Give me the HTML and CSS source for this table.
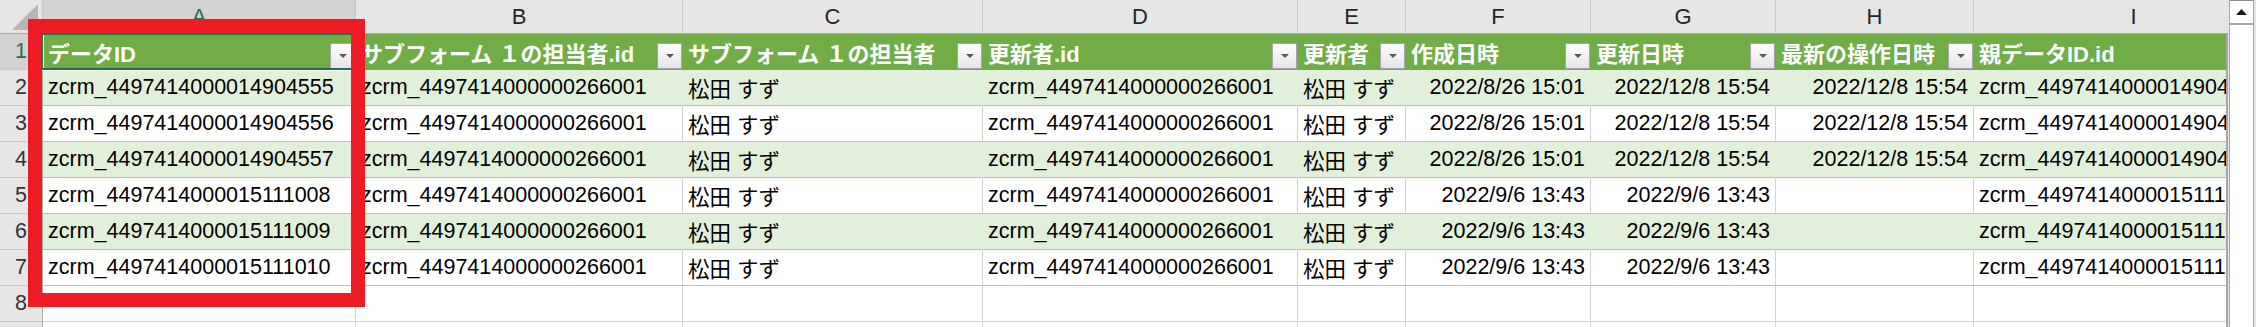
FILE: index.html
```html
<!DOCTYPE html>
<html lang="ja">
<head>
<meta charset="utf-8">
<title>Sheet</title>
<link rel="stylesheet" href="styles.css">
</head>
<body>
<div class="window">
  <div class="grid">
    <div class="row head">
      <div class="corner"><svg width="42" height="33" viewBox="0 0 42 33"><polygon points="12,30 38,30 38,4" fill="#b5b5b5"/></svg></div>
      <div class="colhdr sel">A</div>
      <div class="colhdr">B</div>
      <div class="colhdr">C</div>
      <div class="colhdr">D</div>
      <div class="colhdr">E</div>
      <div class="colhdr">F</div>
      <div class="colhdr">G</div>
      <div class="colhdr">H</div>
      <div class="colhdr">I</div>
    </div>
    <div class="row">
      <div class="rowhdr sel">1</div>
      <div class="th"><span>データID</span><span class="filter"><svg width="8" height="4" viewBox="0 0 8 4"><polygon points="0,0 8,0 4,4" fill="#595959"/></svg></span></div>
      <div class="th"><span>サブフォーム １の担当者.id</span><span class="filter"><svg width="8" height="4" viewBox="0 0 8 4"><polygon points="0,0 8,0 4,4" fill="#595959"/></svg></span></div>
      <div class="th"><span>サブフォーム １の担当者</span><span class="filter"><svg width="8" height="4" viewBox="0 0 8 4"><polygon points="0,0 8,0 4,4" fill="#595959"/></svg></span></div>
      <div class="th"><span>更新者.id</span><span class="filter"><svg width="8" height="4" viewBox="0 0 8 4"><polygon points="0,0 8,0 4,4" fill="#595959"/></svg></span></div>
      <div class="th"><span>更新者</span><span class="filter"><svg width="8" height="4" viewBox="0 0 8 4"><polygon points="0,0 8,0 4,4" fill="#595959"/></svg></span></div>
      <div class="th"><span>作成日時</span><span class="filter"><svg width="8" height="4" viewBox="0 0 8 4"><polygon points="0,0 8,0 4,4" fill="#595959"/></svg></span></div>
      <div class="th"><span>更新日時</span><span class="filter"><svg width="8" height="4" viewBox="0 0 8 4"><polygon points="0,0 8,0 4,4" fill="#595959"/></svg></span></div>
      <div class="th"><span>最新の操作日時</span><span class="filter"><svg width="8" height="4" viewBox="0 0 8 4"><polygon points="0,0 8,0 4,4" fill="#595959"/></svg></span></div>
      <div class="th"><span>親データID.id</span></div>
    </div>
    <div class="row band">
      <div class="rowhdr">2</div>
      <div class="c">zcrm_4497414000014904555</div>
      <div class="c">zcrm_4497414000000266001</div>
      <div class="c">松田 すず</div>
      <div class="c">zcrm_4497414000000266001</div>
      <div class="c">松田 すず</div>
      <div class="c r">2022/8/26 15:01</div>
      <div class="c r">2022/12/8 15:54</div>
      <div class="c r">2022/12/8 15:54</div>
      <div class="c">zcrm_4497414000014904550</div>
    </div>
    <div class="row plain">
      <div class="rowhdr">3</div>
      <div class="c">zcrm_4497414000014904556</div>
      <div class="c">zcrm_4497414000000266001</div>
      <div class="c">松田 すず</div>
      <div class="c">zcrm_4497414000000266001</div>
      <div class="c">松田 すず</div>
      <div class="c r">2022/8/26 15:01</div>
      <div class="c r">2022/12/8 15:54</div>
      <div class="c r">2022/12/8 15:54</div>
      <div class="c">zcrm_4497414000014904550</div>
    </div>
    <div class="row band">
      <div class="rowhdr">4</div>
      <div class="c">zcrm_4497414000014904557</div>
      <div class="c">zcrm_4497414000000266001</div>
      <div class="c">松田 すず</div>
      <div class="c">zcrm_4497414000000266001</div>
      <div class="c">松田 すず</div>
      <div class="c r">2022/8/26 15:01</div>
      <div class="c r">2022/12/8 15:54</div>
      <div class="c r">2022/12/8 15:54</div>
      <div class="c">zcrm_4497414000014904550</div>
    </div>
    <div class="row plain">
      <div class="rowhdr">5</div>
      <div class="c">zcrm_4497414000015111008</div>
      <div class="c">zcrm_4497414000000266001</div>
      <div class="c">松田 すず</div>
      <div class="c">zcrm_4497414000000266001</div>
      <div class="c">松田 すず</div>
      <div class="c r">2022/9/6 13:43</div>
      <div class="c r">2022/9/6 13:43</div>
      <div class="c r"></div>
      <div class="c">zcrm_4497414000015111007</div>
    </div>
    <div class="row band">
      <div class="rowhdr">6</div>
      <div class="c">zcrm_4497414000015111009</div>
      <div class="c">zcrm_4497414000000266001</div>
      <div class="c">松田 すず</div>
      <div class="c">zcrm_4497414000000266001</div>
      <div class="c">松田 すず</div>
      <div class="c r">2022/9/6 13:43</div>
      <div class="c r">2022/9/6 13:43</div>
      <div class="c r"></div>
      <div class="c">zcrm_4497414000015111007</div>
    </div>
    <div class="row plain">
      <div class="rowhdr">7</div>
      <div class="c">zcrm_4497414000015111010</div>
      <div class="c">zcrm_4497414000000266001</div>
      <div class="c">松田 すず</div>
      <div class="c">zcrm_4497414000000266001</div>
      <div class="c">松田 すず</div>
      <div class="c r">2022/9/6 13:43</div>
      <div class="c r">2022/9/6 13:43</div>
      <div class="c r"></div>
      <div class="c">zcrm_4497414000015111007</div>
    </div>
    <div class="row empty">
      <div class="rowhdr">8</div>
      <div class="c"></div><div class="c"></div><div class="c"></div><div class="c"></div>
      <div class="c"></div><div class="c"></div><div class="c"></div><div class="c"></div><div class="c"></div>
    </div>
    <div class="row empty">
      <div class="rowhdr">9</div>
      <div class="c"></div><div class="c"></div><div class="c"></div><div class="c"></div>
      <div class="c"></div><div class="c"></div><div class="c"></div><div class="c"></div><div class="c"></div>
    </div>
  </div>
  <div class="vscroll">
    <div class="track">
      <div class="up"><svg width="11" height="6" viewBox="0 0 11 6"><polygon points="0,6 11,6 5.5,0" fill="#1a1a1a"/></svg></div>
    </div>
  </div>
  <div class="selbox"></div>
  <div class="redbox"></div>
</div>
</body>
</html>
```

FILE: styles.css
```css
* {
  box-sizing: border-box;
  margin: 0;
  padding: 0;
}

html, body {
  width: 2256px;
  height: 327px;
  overflow: hidden;
  background: #fff;
}

body {
  font-family: "Liberation Sans", "Noto Sans CJK JP", sans-serif;
  font-size: 21.5px;
  color: #000;
}

.window {
  position: relative;
  display: flex;
  height: 327px;
}

.grid {
  width: 2226px;
  flex: none;
  overflow: hidden;
  display: flex;
  flex-direction: column;
}

.row {
  flex: none;
  height: 36px;
  display: grid;
  grid-template-columns: 43px 313px 327px 300px 315px 108px 185px 185px 198px 320px;
}

.row.head {
  height: 34px;
}

.row > div {
  display: flex;
  align-items: center;
  min-width: 0;
  overflow: hidden;
  white-space: nowrap;
  border-right: 1px solid transparent;
  border-bottom: 1px solid transparent;
}

.corner {
  background: #e6e6e6;
  border-right-color: #c6c6c6 !important;
  border-bottom-color: #ababab !important;
}

.corner svg {
  display: block;
}

.colhdr {
  justify-content: center;
  background: #e6e6e6;
  border-right-color: #c6c6c6 !important;
  border-bottom-color: #ababab !important;
  font-size: 22px;
  color: #262626;
}

.rowhdr {
  justify-content: center;
  background: #e6e6e6;
  border-right-color: #ababab !important;
  border-bottom-color: #c8c8c8 !important;
  color: #333;
}

.colhdr.sel,
.rowhdr.sel {
  background: #d2d2d2;
  color: #217346;
}

.th {
  justify-content: space-between;
  background: #70ad47;
  border-right-color: #70ad47 !important;
  border-bottom-color: #70ad47 !important;
  color: #fff;
  font-weight: bold;
  font-size: 22px;
  padding-left: 5px;
}

.filter {
  flex: none;
  align-self: flex-end;
  width: 25px;
  height: 26px;
  border: 1px solid #a6a6a6;
  background: linear-gradient(#ffffff, #e4e4ea);
  display: flex;
  align-items: center;
  justify-content: center;
}

.filter svg {
  display: block;
}

.c {
  padding: 0 5px;
}

.c.r {
  justify-content: flex-end;
}

.band > .c {
  background: #e2efda;
  border-right-color: #e2efda;
  border-bottom-color: #a9d08e;
}

.plain > .c {
  background: #fff;
  border-right-color: #d4d4d4;
  border-bottom-color: #a9d08e;
}

.empty > .c {
  background: #fff;
  border-right-color: #d4d4d4;
  border-bottom-color: #d4d4d4;
}

.vscroll {
  width: 30px;
  flex: none;
  padding: 0 2px 0 3px;
  background: linear-gradient(#a6a6a6, #a6a6a6) 0 33px / 2px 100% no-repeat, #e6e6e6;
}

.track {
  height: 100%;
  background: #fff;
  border-left: 1px solid #a6a6a6;
  border-right: 1px solid #a6a6a6;
  display: flex;
  flex-direction: column;
}

.up {
  height: 25px;
  border-top: 1px solid #8c8c8c;
  border-bottom: 2px solid #a6a6a6;
  display: flex;
  align-items: center;
  justify-content: center;
}

.up svg {
  display: block;
}

.selbox {
  position: absolute;
  left: 41px;
  top: 33px;
  width: 316px;
  height: 37px;
  border: 2px solid #217346;
  box-shadow: 0 1px 0 #fff, inset 1px 0 0 #fff;
}

.redbox {
  position: absolute;
  left: 28px;
  top: 19px;
  width: 337px;
  height: 288px;
  border: 14px solid #ed1c24;
}
```
